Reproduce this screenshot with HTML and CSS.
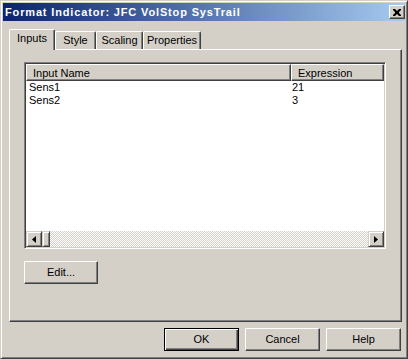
FILE: index.html
```html
<!DOCTYPE html>
<html>
<head>
<meta charset="utf-8">
<link rel="stylesheet" href="styles.css">
</head>
<body>
<div class="window">
  <div class="titlebar">
    <span class="title">Format Indicator: JFC VolStop SysTrail</span>
    <div class="close"><svg width="8" height="7" viewBox="0 0 8 7"><path d="M0 0h2l2 2 2-2h2v1l-2 2v1l2 2v1h-2l-2-2-2 2h-2v-1l2-2v-1l-2-2z" fill="#000"/></svg></div>
  </div>
  <div class="client">
    <div class="tabs">
      <div class="tab selected t-inputs">Inputs</div>
      <div class="tab t-style">Style</div>
      <div class="tab t-scaling">Scaling</div>
      <div class="tab t-props">Properties</div>
    </div>
    <div class="panel">
      <div class="listview">
        <div class="lv-inner">
          <div class="lv-header">
            <div class="hcol hcol1">Input Name</div>
            <div class="hcol hcol2">Expression</div>
          </div>
          <div class="lv-body">
            <div class="row"><span class="c1">Sens1</span><span class="c2">21</span></div>
            <div class="row"><span class="c1">Sens2</span><span class="c2">3</span></div>
          </div>
          <div class="hscroll">
            <div class="sbtn"><svg width="4" height="7" viewBox="0 0 4 7"><path d="M4 0v7L0 3.5z" fill="#000"/></svg></div>
            <div class="thumb"></div>
            <div class="track"></div>
            <div class="sbtn"><svg width="4" height="7" viewBox="0 0 4 7"><path d="M0 0v7l4-3.5z" fill="#000"/></svg></div>
          </div>
        </div>
      </div>
      <div class="btn edit">Edit...</div>
    </div>
    <div class="footer">
      <div class="btn default">OK</div>
      <div class="btn">Cancel</div>
      <div class="btn">Help</div>
    </div>
  </div>
</div>
</body>
</html>
```
FILE: styles.css
```css
* { box-sizing: border-box; margin: 0; padding: 0; }
html, body { width: 408px; height: 359px; overflow: hidden; }
body {
  background: #d4d0c8;
  font-family: "Liberation Sans", Arial, sans-serif;
  font-size: 11px;
  color: #000;
}
.window {
  width: 408px;
  height: 359px;
  border: 1px solid;
  border-color: #d4d0c8 #404040 #404040 #d4d0c8;
  box-shadow: inset 1px 1px #fff, inset -1px -1px #808080;
  padding: 2px;
  display: flex;
  flex-direction: column;
}
.titlebar {
  height: 18px;
  flex: none;
  background: linear-gradient(to right, #0a246a, #a6caf0);
  display: flex;
  align-items: center;
  padding-left: 2px;
  padding-right: 0;
}
.title {
  flex: 1;
  color: #fff;
  font-weight: bold;
  font-size: 11px;
  line-height: 13px;
  letter-spacing: 0.85px;
  white-space: nowrap;
}
.close {
  width: 16px;
  height: 14px;
  background: #d4d0c8;
  border: 1px solid;
  border-color: #fff #404040 #404040 #fff;
  box-shadow: inset -1px -1px #808080;
  display: flex;
  align-items: center;
  justify-content: center;
  padding-right: 1px;
}
.close svg { display: block; }
.client {
  flex: 1;
  display: flex;
  flex-direction: column;
  padding: 8px 3px 0 6px;
}
.tabs {
  height: 20px;
  flex: none;
  display: flex;
  align-items: flex-end;
}
.tab {
  height: 18px;
  border-top: 1px solid #fff;
  border-left: 1px solid #fff;
  border-right: 1px solid #404040;
  box-shadow: inset -1px 0 #808080;
  border-top-left-radius: 2px;
  border-top-right-radius: 2px;
  padding-top: 2px;
  line-height: 13px;
  text-align: center;
  background: #d4d0c8;
}
.tab.selected {
  height: 21px;
  margin-bottom: -1px;
  position: relative;
  z-index: 1;
  padding-top: 2px;
}
.t-inputs { width: 46px; }
.t-style { width: 41px; }
.t-scaling { width: 47px; }
.t-props { width: 58px; }
.panel {
  height: 273px;
  flex: none;
  border: 1px solid;
  border-color: #fff #404040 #404040 #fff;
  box-shadow: inset -1px -1px #808080;
  padding: 12px 14px;
}
.listview {
  width: 362px;
  height: 187px;
  border: 1px solid;
  border-color: #808080 #fff #fff #808080;
  padding: 1px;
  box-shadow: inset 1px 1px #404040, inset -1px -1px #d4d0c8;
}
.lv-inner {
  width: 100%;
  height: 100%;
  display: flex;
  flex-direction: column;
  background: #fff;
}
.lv-header {
  height: 17px;
  flex: none;
  display: flex;
  background: #d4d0c8;
}
.hcol {
  height: 17px;
  border-top: 1px solid #fff;
  border-left: 1px solid #fff;
  border-right: 1px solid #404040;
  border-bottom: 1px solid #404040;
  box-shadow: inset -1px -1px #808080;
  padding: 2px 0 0 6px;
  line-height: 12px;
  white-space: nowrap;
}
.hcol1 { width: 265px; }
.hcol2 { flex: 1; }
.lv-body {
  flex: 1;
  padding-top: 0;
}
.row {
  display: flex;
  height: 13px;
  line-height: 13px;
}
.c1 { width: 265px; padding-left: 3px; }
.c2 { padding-left: 1px; }
.hscroll {
  height: 16px;
  flex: none;
  display: flex;
}
.sbtn, .thumb {
  height: 16px;
  background: #d4d0c8;
  border: 1px solid;
  border-color: #d4d0c8 #404040 #404040 #d4d0c8;
  box-shadow: inset 1px 1px #fff, inset -1px -1px #808080;
}
.sbtn {
  width: 16px;
  display: flex;
  align-items: center;
  justify-content: center;
}
.sbtn svg { display: block; }
.thumb { width: 8px; }
.track {
  flex: 1;
  background: repeating-conic-gradient(#fff 0 25%, #d4d0c8 0 50%) 0 0 / 2px 2px;
}
.btn {
  width: 75px;
  height: 23px;
  background: #d4d0c8;
  border: 1px solid;
  border-color: #fff #404040 #404040 #fff;
  box-shadow: inset -1px -1px #808080;
  display: flex;
  align-items: center;
  justify-content: center;
  line-height: 13px;
}
.btn.edit {
  width: 74px;
  margin-top: 12px;
}
.btn.default {
  border-color: #000;
  box-shadow: inset 1px 1px #fff, inset -1px -1px #404040, inset -2px -2px #808080;
}
.footer {
  margin-top: 6px;
  display: flex;
  justify-content: flex-end;
  gap: 6px;
  padding-right: 1px;
}
```
